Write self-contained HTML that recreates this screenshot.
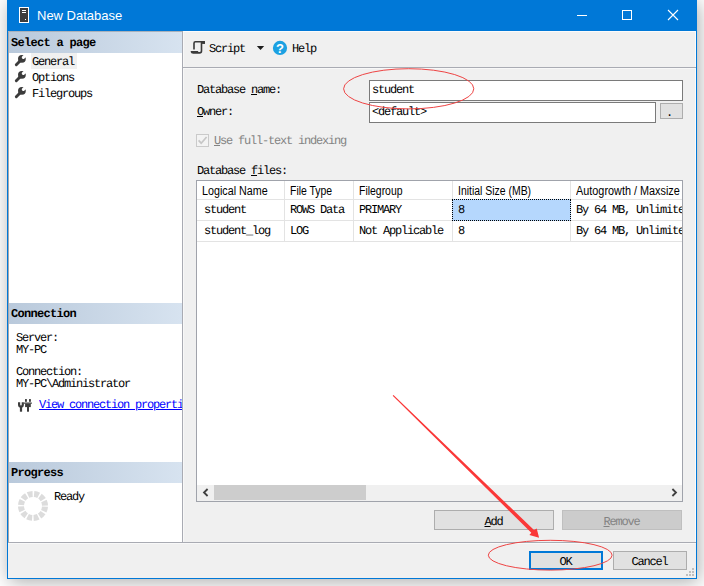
<!DOCTYPE html>
<html>
<head>
<meta charset="utf-8">
<title>New Database</title>
<style>
html,body{margin:0;padding:0;}
body{width:704px;height:586px;position:relative;overflow:hidden;background:#fff;font-family:"Liberation Mono",monospace;font-size:12px;color:#000;}
.abs,.m,.s,.b{position:absolute;}
/* monospace SimSun-like text: 6px advance */
.m{font-family:"Liberation Mono",monospace;font-size:12px;letter-spacing:-1.2px;line-height:12px;white-space:pre;color:#000;margin:0 0 0 -1px;text-rendering:geometricPrecision;}
.b{font-family:"Liberation Mono",monospace;font-weight:bold;font-size:12px;letter-spacing:-0.7px;line-height:12px;white-space:pre;color:#000;text-rendering:geometricPrecision;}
.s{font-family:"Liberation Sans",sans-serif;font-size:12px;line-height:12px;white-space:pre;color:#000;transform:scaleX(.87);transform-origin:0 0;}
.gl{position:absolute;background:#e3e3e3;}
u{text-decoration:underline;text-underline-offset:1px;}
#shadow{position:absolute;left:7px;top:0;width:690px;height:579px;box-shadow:2px 3px 18px 0 rgba(0,0,0,.33);}
#win{position:absolute;left:7px;top:0;width:688px;height:578px;border:1px solid #0078d7;border-top:none;background:#f0f0f0;}
#title{position:absolute;left:7px;top:0;width:690px;height:31px;background:#0078d7;}
#title .cap{position:absolute;left:30px;top:8px;font-family:"Liberation Sans",sans-serif;font-size:13px;line-height:16px;color:#fff;white-space:pre;}
#left{position:absolute;left:8px;top:31px;width:174px;height:511px;background:#fff;}
.hdr{position:absolute;left:0;width:174px;height:21px;background:linear-gradient(to right,#b9c9db,#d7e3f0);}
#vsep{position:absolute;left:182px;top:31px;width:1px;height:511px;background:#a9abb3;box-shadow:1px 0 0 #f8f8f8;}
#tsep{position:absolute;left:183px;top:67px;width:513px;height:1px;background:#a9abb3;box-shadow:0 1px 0 #f8f8f8;}
#bsep{position:absolute;left:8px;top:542px;width:688px;height:1px;background:#a9abb3;box-shadow:0 1px 0 #f8f8f8;}
.inp{position:absolute;background:#fff;border:1px solid #7a7a7a;box-sizing:border-box;}
.btn{position:absolute;background:#e1e1e1;border:1px solid #adadad;box-sizing:border-box;}
.btn .m,.btn .lbl{position:absolute;left:0;right:0;text-align:center;}
#grid{position:absolute;left:196px;top:180px;width:487px;height:322px;background:#fff;border:1px solid #a0a3ab;box-sizing:border-box;overflow:hidden;}
</style>
</head>
<body>
<div id="shadow"></div>
<div id="win"></div>
<div id="title">
  <svg class="abs" style="left:12px;top:7px" width="12" height="17" viewBox="0 0 12 17"><rect x="0.5" y="0.5" width="9" height="15" fill="#3c3c3c" stroke="#fff" stroke-width="1"/><rect x="3" y="3" width="4" height="1" fill="#fff"/><rect x="3" y="5" width="4" height="1" fill="#fff"/><rect x="6" y="12" width="1" height="1" fill="#fff"/></svg>
  <div class="cap">New Database</div>
  <svg class="abs" style="left:569px;top:9px" width="12" height="12" viewBox="0 0 12 12"><rect x="1" y="6" width="10" height="1" fill="#fff"/></svg>
  <svg class="abs" style="left:614px;top:9px" width="12" height="12" viewBox="0 0 12 12"><rect x="1.5" y="1.5" width="9" height="9" fill="none" stroke="#fff" stroke-width="1"/></svg>
  <svg class="abs" style="left:660px;top:9px" width="12" height="12" viewBox="0 0 12 12"><path d="M1 1 L11 11 M11 1 L1 11" stroke="#fff" stroke-width="1.1" fill="none"/></svg>
</div>

<div id="left">
  <div class="hdr" style="top:0;height:22px"></div>
  <div class="hdr" style="top:272px"></div>
  <div class="hdr" style="top:431px"></div>
</div>
<div class="b" style="left:11px;top:37px">Select a page</div>
<div class="abs" style="left:31px;top:53px;width:46px;height:16px;background:#f0f0f0"></div>
<div class="m" style="left:33px;top:56px">General</div>
<div class="m" style="left:33px;top:72px">Options</div>
<div class="m" style="left:33px;top:88px">Filegroups</div>

<div class="b" style="left:11px;top:308px">Connection</div>
<div class="m" style="left:17px;top:332px">Server:</div>
<div class="m" style="left:17px;top:344px">MY-PC</div>
<div class="m" style="left:17px;top:366px">Connection:</div>
<div class="m" style="left:17px;top:378px">MY-PC\Administrator</div>
<div class="m" style="left:40px;top:399px;width:143px;overflow:hidden;color:#0000ff"><u>View connection properties</u></div>

<div class="b" style="left:11px;top:467px">Progress</div>
<div class="m" style="left:55px;top:491px">Ready</div>

<div class="abs" style="left:8px;top:31px;width:1px;height:511px;background:#a3a7ae"></div>
<div class="abs" style="left:8px;top:31px;width:174px;height:1px;background:#a9b1bb"></div>
<div class="abs" style="left:183px;top:31px;width:513px;height:1px;background:#fbfbfb"></div>
<div class="abs" style="left:695px;top:31px;width:1px;height:511px;background:#fbfbfb"></div>
<div id="vsep"></div>
<div id="tsep"></div>
<div id="bsep"></div>

<!-- toolbar -->
<div class="m" style="left:210px;top:43px">Script</div>
<div class="m" style="left:293px;top:43px">Help</div>

<!-- form -->
<div class="m" style="left:198px;top:84px">Database <u>n</u>ame:</div>
<div class="m" style="left:198px;top:106px"><u>O</u>wner:</div>
<div class="inp" style="left:369px;top:80px;width:314px;height:21px"></div>
<div class="m" style="left:373px;top:84px">student</div>
<div class="inp" style="left:369px;top:102px;width:287px;height:21px"></div>
<div class="m" style="left:373px;top:106px">&lt;default&gt;</div>
<div class="btn" style="left:660px;top:103px;width:23px;height:16px"><div class="m" style="top:3px;left:-4px">.</div></div>
<div class="abs" style="left:196px;top:134px;width:13px;height:13px;box-sizing:border-box;border:1px solid #cacaca;background:#f3f3f3"></div>
<div class="m" style="left:215px;top:135px;color:#838383"><u>U</u>se full-text indexing</div>
<div class="m" style="left:198px;top:165px">Database <u>f</u>iles:</div>

<div id="grid">
  <div class="gl" style="left:0;top:18px;width:485px;height:1px"></div>
  <div class="gl" style="left:0;top:39px;width:485px;height:1px"></div>
  <div class="gl" style="left:0;top:60px;width:485px;height:1px"></div>
  <div class="gl" style="left:87px;top:0;width:1px;height:61px"></div>
  <div class="gl" style="left:156px;top:0;width:1px;height:61px"></div>
  <div class="gl" style="left:255px;top:0;width:1px;height:61px"></div>
  <div class="gl" style="left:373px;top:0;width:1px;height:61px"></div>
  <div class="abs" style="left:255px;top:18px;width:119px;height:22px;box-sizing:border-box;background:#b5d7fd;border:1px dotted #000"></div>
  <div class="s" style="left:5px;top:4px;transform:scaleX(.895)">Logical Name</div>
  <div class="s" style="left:93px;top:4px">File Type</div>
  <div class="s" style="left:162px;top:4px">Filegroup</div>
  <div class="s" style="left:261px;top:4px">Initial Size (MB)</div>
  <div class="s" style="left:379px;top:4px;transform:scaleX(.905)">Autogrowth / Maxsize</div>
  <div class="m" style="left:8px;top:23px">student</div>
  <div class="m" style="left:94px;top:23px">ROWS Data</div>
  <div class="m" style="left:163px;top:23px">PRIMARY</div>
  <div class="m" style="left:262px;top:23px">8</div>
  <div class="m" style="left:380px;top:23px">By 64 MB, Unlimited</div>
  <div class="m" style="left:8px;top:44px">student_log</div>
  <div class="m" style="left:94px;top:44px">LOG</div>
  <div class="m" style="left:163px;top:44px">Not Applicable</div>
  <div class="m" style="left:262px;top:44px">8</div>
  <div class="m" style="left:380px;top:44px">By 64 MB, Unlimited</div>
  <div class="abs" style="left:0;top:304px;width:485px;height:16px;background:#f0f0f0"></div>
  <div class="abs" style="left:17px;top:304px;width:152px;height:15px;background:#cdcdcd"></div>
  <svg class="abs" style="left:4px;top:306px" width="10" height="12" viewBox="0 0 10 12"><path d="M6.6 2 L3 5.5 L6.6 9" fill="none" stroke="#404040" stroke-width="1.8"/></svg>
  <svg class="abs" style="left:472px;top:306px" width="10" height="12" viewBox="0 0 10 12"><path d="M3.4 2 L7 5.5 L3.4 9" fill="none" stroke="#404040" stroke-width="1.8"/></svg>
</div>

<div class="btn" style="left:434px;top:510px;width:120px;height:20px"><div class="m" style="top:5px"><u>A</u>dd</div></div>
<div class="btn" style="left:562px;top:510px;width:120px;height:20px;background:#cccccc;border-color:#bfbfbf"><div class="m" style="top:5px;color:#838383"><u>R</u>emove</div></div>
<div class="btn" style="left:529px;top:551px;width:74px;height:19px;border:2px solid #0078d7"><div class="m" style="top:3px">OK</div></div>
<div class="btn" style="left:613px;top:551px;width:74px;height:19px"><div class="m" style="top:4px">Cancel</div></div>

<svg class="abs" style="left:14px;top:54px" width="13" height="13" viewBox="0 0 13 13"><path d="M2.3 10.7 L7 6" stroke="#3c3c3c" stroke-width="2.9" stroke-linecap="round" fill="none"/><circle cx="7.9" cy="4.8" r="3.9" fill="#3c3c3c"/><path d="M9.4 3.4 L13 0" stroke="#fff" stroke-width="3.1" stroke-linecap="round" fill="none"/></svg>
<svg class="abs" style="left:14px;top:70px" width="13" height="13" viewBox="0 0 13 13"><path d="M2.3 10.7 L7 6" stroke="#3c3c3c" stroke-width="2.9" stroke-linecap="round" fill="none"/><circle cx="7.9" cy="4.8" r="3.9" fill="#3c3c3c"/><path d="M9.4 3.4 L13 0" stroke="#fff" stroke-width="3.1" stroke-linecap="round" fill="none"/></svg>
<svg class="abs" style="left:14px;top:86px" width="13" height="13" viewBox="0 0 13 13"><path d="M2.3 10.7 L7 6" stroke="#3c3c3c" stroke-width="2.9" stroke-linecap="round" fill="none"/><circle cx="7.9" cy="4.8" r="3.9" fill="#3c3c3c"/><path d="M9.4 3.4 L13 0" stroke="#fff" stroke-width="3.1" stroke-linecap="round" fill="none"/></svg>
<svg class="abs" style="left:189px;top:39px" width="18" height="17" viewBox="189 39 18 17"><path d="M194 49.6 V43.2 Q194 41.8 195.4 41.8 H204.1 V43.8 M201.5 42 V51 Q201.5 52.9 199.6 52.9 H193.2 Q191.6 52.9 191.4 51.7 H198.2" fill="none" stroke="#3a3a3a" stroke-width="1.6" stroke-linejoin="round"/><rect x="201.5" y="41" width="3.4" height="2.9" fill="#3a3a3a"/></svg>
<svg class="abs" style="left:256px;top:45px" width="10" height="6" viewBox="256 45 10 6"><path d="M256.8 46 H264.2 L260.5 50 Z" fill="#1e1e1e"/></svg>
<svg class="abs" style="left:272px;top:40px" width="16" height="16" viewBox="272 40 16 16"><circle cx="280" cy="47.9" r="7.1" fill="#1ba1e2"/><text x="280" y="52.7" text-anchor="middle" font-family="Liberation Sans, sans-serif" font-weight="bold" font-size="13" fill="#fff">?</text></svg>
<svg class="abs" style="left:17px;top:398px" width="16" height="15" viewBox="17 398 16 15"><g fill="#3c3c3c"><rect x="25" y="399.1" width="1.9" height="2.7"/><rect x="29" y="399.1" width="1.9" height="2.7"/><rect x="24.1" y="402.5" width="7.7" height="1.3"/><rect x="25.1" y="403.8" width="5.7" height="3.3"/><rect x="27" y="407" width="2" height="4.7"/><rect x="19.9" y="406.2" width="2.2" height="5.5"/></g><path d="M19.1 402.3 V404.4 Q19.1 406.5 21 406.5 Q22.8 406.5 22.8 404.4 V402.3" fill="none" stroke="#3c3c3c" stroke-width="2.2"/></svg>
<svg class="abs" style="left:17px;top:490px" width="32" height="32" viewBox="17 490 32 32"><circle cx="33" cy="505.9" r="12" fill="none" stroke="#dcdcdc" stroke-width="6" stroke-dasharray="4.75 1.533" stroke-dashoffset="-0.77"/></svg>
<svg class="abs" style="left:196px;top:134px" width="13" height="13" viewBox="0 0 13 13"><path d="M2.6 6.4 L5.2 9.2 L10.6 3" fill="none" stroke="#c6c6c6" stroke-width="1.7"/></svg>
<svg class="abs" style="left:685px;top:567px" width="10" height="10" viewBox="685 567 10 10"><g fill="#bfbfbf"><rect x="692" y="568" width="2" height="2"/><rect x="689" y="571" width="2" height="2"/><rect x="692" y="571" width="2" height="2"/><rect x="686" y="574" width="2" height="2"/><rect x="689" y="574" width="2" height="2"/><rect x="692" y="574" width="2" height="2"/></g></svg>
<svg class="abs" style="left:0;top:0;pointer-events:none" width="704" height="586" viewBox="0 0 704 586"><ellipse cx="408.7" cy="88.8" rx="65.1" ry="20.1" fill="none" stroke="#ee4444" stroke-width="1"/><ellipse cx="550.2" cy="555.2" rx="61.9" ry="14.9" fill="none" stroke="#ee4444" stroke-width="1"/><path d="M392.7 395.7 L531.3 532.8 L529.4 535 L539.1 537.7 L536.7 528.6 L534 530 L393.5 394.9 Z" fill="#fa3838"/></svg>
</body>
</html>
